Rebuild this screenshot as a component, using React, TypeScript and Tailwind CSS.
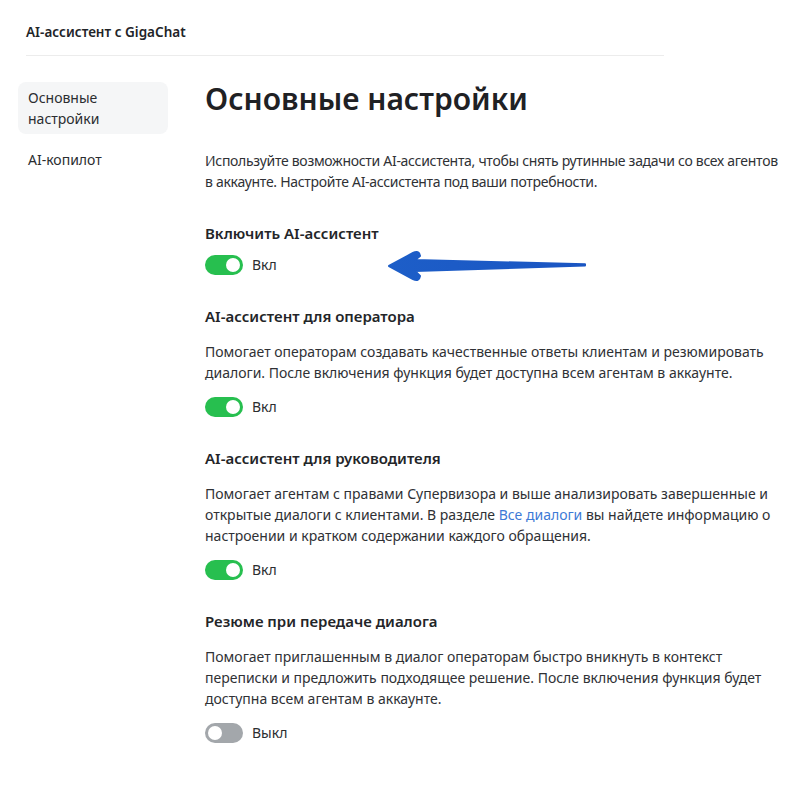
import React from "react";

const FONT = "font-['Noto_Sans','Open_Sans',sans-serif]";

function Toggle({ on }: { on: boolean }) {
  return (
    <div className="flex items-center gap-[9px]">
      <span
        className={`relative inline-flex h-[20px] w-[38px] items-center rounded-full ${on ? "bg-[#27bf4f]" : "bg-[#a3a7ab]"}`}
      >
        <span
          className={`absolute top-[3px] h-[14px] w-[14px] rounded-full bg-white ${on ? "left-[21px]" : "left-[3px]"}`}
        />
      </span>
      <span className="text-[14px] leading-[21px] text-[#2b2d30]">{on ? "Вкл" : "Выкл"}</span>
    </div>
  );
}

function Setting({ title, children, on }: { title: string; children?: React.ReactNode; on: boolean }) {
  return (
    <section className="mt-[30px]">
      <h2 className="text-[15px] font-semibold leading-[22px] text-[#232528]">{title}</h2>
      {children ? (
        <>
          <p className="mt-[14px] text-[14px] leading-[21px] text-[#2f3135]">{children}</p>
          <div className="mt-[13px]">
            <Toggle on={on} />
          </div>
        </>
      ) : (
        <div className="mt-[10px]">
          <Toggle on={on} />
        </div>
      )}
    </section>
  );
}

function Arrow() {
  return (
    <svg className="absolute left-[380px] top-[245px]" width="220" height="45" viewBox="0 0 220 45">
      <defs>
        <linearGradient id="ar" x1="0" x2="1" y1="0" y2="0">
          <stop offset="0" stopColor="#1d5ec8" />
          <stop offset="1" stopColor="#1a55c2" />
        </linearGradient>
      </defs>
      <path
        d="M9,21 L33,8 Q39,5 40,11 L35,15 L205,19.3 L205,20.5 L35,26 L40,31 Q39,37 33,34 Z"
        fill="url(#ar)"
        stroke="url(#ar)"
        strokeWidth="2"
        strokeLinejoin="round"
      />
    </svg>
  );
}

export default function App() {
  return (
    <div className={`relative min-h-[803px] bg-white ${FONT}`}>
      <header className="px-[26px] pt-[22px]">
        <div className="w-[638px] border-b border-[#ececec] pb-[12px] text-[13.5px] font-semibold leading-[21px] text-[#222428]">
          AI-ассистент с GigaChat
        </div>
      </header>

      <div className="flex pt-[23px]">
        <nav className="ml-[18px] mt-[3px] flex w-[150px] flex-col gap-[10px] text-[14px] leading-[21px] text-[#2b2d30]">
          <div className="rounded-[8px] bg-[#f5f6f7] px-[10px] py-[5px]">
            Основные
            <br />
            настройки
          </div>
          <div className="px-[10px] py-[5px]">AI-копилот</div>
        </nav>

        <main className="ml-[37px] w-[580px]">
          <h1 className="text-[30px] font-semibold leading-[40px] text-[#1f2124]">Основные настройки</h1>
          <p className="mt-[31px] text-[14px] leading-[21px] tracking-[-0.3px] text-[#2f3135]">
            Используйте возможности AI-ассистента, чтобы снять рутинные задачи со всех агентов в аккаунте. Настройте
            AI-ассистента под ваши потребности.
          </p>

          <Setting title="Включить AI-ассистент" on />

          <Setting title="AI-ассистент для оператора" on>
            Помогает операторам создавать качественные ответы клиентам и резюмировать диалоги. После включения функция
            будет доступна всем агентам в аккаунте.
          </Setting>

          <Setting title="AI-ассистент для руководителя" on>
            Помогает агентам с правами Супервизора и выше анализировать завершенные и открытые диалоги с клиентами. В
            разделе <a className="text-[#3d7ad6]">Все диалоги</a> вы найдете информацию о настроении и кратком
            содержании каждого обращения.
          </Setting>

          <Setting title="Резюме при передаче диалога" on={false}>
            Помогает приглашенным в диалог операторам быстро вникнуть в контекст переписки и предложить подходящее
            решение. После включения функция будет доступна всем агентам в аккаунте.
          </Setting>
        </main>
      </div>

      <Arrow />
    </div>
  );
}
